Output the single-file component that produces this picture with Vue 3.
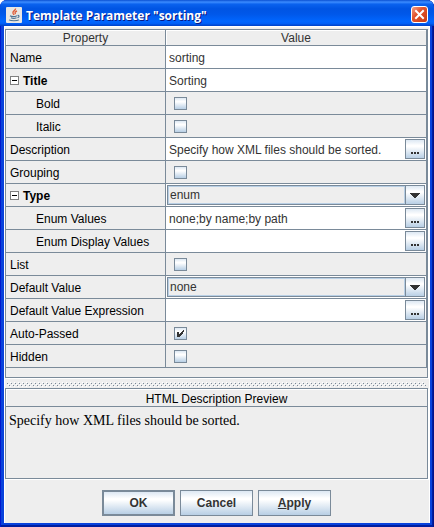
<script setup>
import { ref, reactive, computed } from 'vue'

const rows = reactive([
  { id: 'name', label: 'Name', kind: 'text', value: 'sorting' },
  { id: 'title', label: 'Title', kind: 'text', value: 'Sorting', group: true },
  { id: 'bold', label: 'Bold', kind: 'check', value: false, parent: 'title' },
  { id: 'italic', label: 'Italic', kind: 'check', value: false, parent: 'title' },
  { id: 'description', label: 'Description', kind: 'dialog', value: 'Specify how XML files should be sorted.' },
  { id: 'grouping', label: 'Grouping', kind: 'check', value: false },
  { id: 'type', label: 'Type', kind: 'select', value: 'enum', options: ['enum', 'string', 'boolean', 'integer'], group: true },
  { id: 'enum-values', label: 'Enum Values', kind: 'dialog', value: 'none;by name;by path', parent: 'type' },
  { id: 'enum-display', label: 'Enum Display Values', kind: 'dialog', value: '', parent: 'type' },
  { id: 'list', label: 'List', kind: 'check', value: false },
  { id: 'default', label: 'Default Value', kind: 'select', value: 'none', options: ['none', 'by name', 'by path'] },
  { id: 'default-expr', label: 'Default Value Expression', kind: 'dialog', value: '' },
  { id: 'auto', label: 'Auto-Passed', kind: 'check', value: true },
  { id: 'hidden', label: 'Hidden', kind: 'check', value: false }
])

const collapsed = ref([])
const visibleRows = computed(() => rows.filter((r) => !collapsed.value.includes(r.parent)))
const description = computed(() => rows.find((r) => r.id === 'description').value)

function toggle(id) {
  collapsed.value = collapsed.value.includes(id)
    ? collapsed.value.filter((c) => c !== id)
    : [...collapsed.value, id]
}
</script>

<template>
  <main class="window">
    <header class="titlebar">
      <svg class="java" viewBox="0 0 16 16" width="16" height="16" aria-hidden="true">
        <rect width="16" height="16" rx="1" fill="#e9e7e3" />
        <path d="M9.5 1.5c.5 2-3.500 2.500-2.500 4.800l1 1.700M11 4c-2 .8-2.400 1.600-1.500 3.200" fill="none" stroke="#e0603c" stroke-width="1.4" />
        <path d="M4 8.700c1.500 .9 5 .9 7 0M5 10.700c1.500 .8 4 .8 5.500 0M11.500 8.500c2-.5 2 1.500 0 2.200M3 12.900c2 1.200 8 1.200 10 0" fill="none" stroke="#4d7394" stroke-width="1.1" />
      </svg>
      <h1>Template Parameter "sorting"</h1>
      <button class="close" type="button" aria-label="Close">
        <svg viewBox="0 0 15 15" width="15" height="15" aria-hidden="true">
          <path d="M4 4l7 7M11 4l-7 7" stroke="#fff" stroke-width="2" stroke-linecap="square" />
        </svg>
      </button>
    </header>

    <div class="body">
      <section class="panel grid-panel">
        <table>
          <thead>
            <tr>
              <th scope="col" class="prop">Property</th>
              <th scope="col">Value</th>
            </tr>
          </thead>
          <tbody>
            <tr v-for="row in visibleRows" :key="row.id">
              <th scope="row" class="prop" :class="{ child: row.parent, group: row.group }">
                <div class="name">
                  <button
                    v-if="row.group"
                    class="toggle"
                    type="button"
                    :aria-label="'Toggle ' + row.label"
                    :aria-expanded="!collapsed.includes(row.id)"
                    @click="toggle(row.id)"
                  >
                    <svg viewBox="0 0 9 9" width="9" height="9" shape-rendering="crispEdges" aria-hidden="true">
                      <rect x="0.5" y="0.5" width="8" height="8" fill="#fff" stroke="#808080" />
                      <path d="M2 4.5h5" stroke="#000" />
                      <path v-if="collapsed.includes(row.id)" d="M4.5 2v5" stroke="#000" />
                    </svg>
                  </button>
                  <label :for="row.id">{{ row.label }}</label>
                </div>
              </th>
              <td :class="row.kind">
                <div class="cell">
                  <input v-if="row.kind === 'check'" :id="row.id" v-model="row.value" type="checkbox" />
                  <div v-else-if="row.kind === 'select'" class="combo">
                    <select :id="row.id" v-model="row.value">
                      <option v-for="o in row.options" :key="o">{{ o }}</option>
                    </select>
                    <span class="arrow">
                      <svg viewBox="0 0 10 5" width="10" height="5" shape-rendering="crispEdges" aria-hidden="true">
                        <path d="M0 0h10v1h-1v1h-1v1h-1v1h-1v1h-2v-1h-1v-1h-1v-1h-1v-1h-1z" fill="#333" />
                      </svg>
                    </span>
                  </div>
                  <template v-else>
                    <input :id="row.id" v-model="row.value" class="field" type="text" />
                    <button v-if="row.kind === 'dialog'" class="more" type="button" :aria-label="'Edit ' + row.label">
                      <svg viewBox="0 0 8 2" width="8" height="2" shape-rendering="crispEdges" aria-hidden="true">
                        <path d="M0 0h2v2h-2zM3 0h2v2h-2zM6 0h2v2h-2z" fill="#333" />
                      </svg>
                    </button>
                  </template>
                </div>
              </td>
            </tr>
          </tbody>
        </table>
      </section>

      <div class="splitter" role="separator">
        <svg width="100%" height="5" shape-rendering="crispEdges" aria-hidden="true">
          <defs>
            <pattern id="bumps" width="4" height="4" patternUnits="userSpaceOnUse">
              <path d="M1 2h1v1h-1zM3 0h1v1h-1z" fill="#fff" />
              <path d="M0 1h1v1h-1zM2 3h1v1h-1z" fill="#7a8a99" />
            </pattern>
          </defs>
          <rect width="100%" height="5" fill="url(#bumps)" />
        </svg>
      </div>

      <section class="panel preview">
        <h2>HTML Description Preview</h2>
        <p>{{ description }}</p>
      </section>

      <footer class="actions">
        <button class="push default" type="button">OK</button>
        <button class="push" type="button">Cancel</button>
        <button class="push" type="button"><u>A</u>pply</button>
      </footer>
    </div>
  </main>
</template>

<style>
body {
  margin: 0;
  background: #fff;
}
</style>

<style scoped>
* {
  box-sizing: border-box;
}

.window {
  --line: #7a8a99;
  --metal: linear-gradient(#dde8f3 0%, #fff 30%, #fff 36%, #b8cfe5 100%);
  display: flex;
  flex-direction: column;
  min-height: 100vh;
  padding: 0 4px 4px;
  border-radius: 7px 7px 0 0;
  background: #0842dc;
  box-shadow: inset 1px 0 #0019cf, inset -1px 0 #00138c, inset -2px -1px #001ea0, inset 0 -2px #001ea0;
  font: 12px/16px "Liberation Sans", Arial, sans-serif;
  color: #000;
  overflow: hidden;
}

button,
input,
select {
  margin: 0;
  padding: 0;
  border: 0;
  border-radius: 0;
  font: inherit;
  color: #333;
  appearance: none;
}

.titlebar {
  display: flex;
  align-items: center;
  gap: 4px;
  height: 26px;
  margin: 0 -4px;
  padding: 3px 6px 0;
  background: linear-gradient(#0a50d2 0%, #3c8cff 8%, #0a62ee 16%, #0054e3 34%, #0058ea 55%, #0066ff 82%, #0060f8 90%, #0040c4 100%);
}

.titlebar h1 {
  flex: 1;
  margin: 0;
  padding-top: 2px;
  font: bold 12px/18px "Open Sans", "Noto Sans", sans-serif;
  color: #fff;
  text-shadow: 1px 1px #0a1883;
  white-space: nowrap;
}

.close {
  width: 17px;
  height: 17px;
  border: 1px solid #fff;
  border-radius: 3px;
  background: linear-gradient(135deg, #f0a088, #e2532c 40%, #c73c14);
  display: grid;
  place-items: center;
}

.body {
  flex: 1;
  display: flex;
  flex-direction: column;
  padding: 3px 2px 7px 1px;
  background: #eee;
  box-shadow: inset 1px 1px #fff, inset -1px 0 #fff, inset 0 2px #f6f5ee;
}

.panel {
  border: 1px solid var(--line);
  box-shadow: 1px 1px #fff;
}

.grid-panel {
  padding-bottom: 9px;
}

table {
  width: 100%;
  border-collapse: separate;
  border-spacing: 0;
  table-layout: fixed;
}

th,
td {
  padding: 0;
  border: solid var(--line);
  border-width: 0 1px 1px 0;
  font-weight: normal;
  text-align: left;
}

.prop {
  width: 160px;
}

thead th {
  height: 16px;
  line-height: 14px;
  padding-top: 1px;
  text-align: center;
  color: #333;
  box-shadow: inset 1px 1px #fff;
}

.name {
  display: flex;
  align-items: center;
  gap: 4px;
  height: 22px;
  padding-left: 4px;
}

.name label {
  padding-top: 2px;
}

.child .name {
  padding-left: 30px;
}

.group {
  font-weight: bold;
}

.toggle {
  display: flex;
  background: none;
}

.cell {
  display: flex;
  align-items: center;
  height: 22px;
  padding: 1px;
}

td {
  background: #fff;
}

td.check {
  background: #eee;
}

.check .cell {
  padding-left: 8px;
}

.check input {
  width: 13px;
  height: 13px;
  border: 1px solid var(--line);
  background: var(--metal);
}

.check input:checked {
  background:
    url("data:image/svg+xml,%3Csvg xmlns='http://www.w3.org/2000/svg' width='11' height='11' shape-rendering='crispEdges'%3E%3Cpath d='M2 4h2v2h1v-1h1v-1h1v-1h1v-1h1v2h-1v2h-1v1h-1v1h-1v1h-3z' fill='%23333'/%3E%3C/svg%3E") no-repeat,
    var(--metal);
}

.field {
  flex: 1;
  min-width: 0;
  height: 20px;
  padding: 2px 0 0 2px;
  background: #fff;
}

.more,
.arrow {
  flex: none;
  display: flex;
  justify-content: center;
  width: 20px;
  height: 20px;
  border: 1px solid var(--line);
  background: var(--metal);
}

.more {
  align-items: flex-end;
  padding-bottom: 4px;
}

.combo {
  flex: 1;
  display: flex;
}

.combo select {
  flex: 1;
  height: 20px;
  padding-left: 2px;
  border: 1px solid var(--line);
  border-right: 0;
  background: #eee;
  box-shadow: inset 0 0 0 1px #b8cfe5;
}

.arrow {
  align-items: center;
  pointer-events: none;
}

.splitter {
  display: flex;
  margin: 4px 2px 1px;
}

.preview {
  flex: 1;
  min-height: 60px;
}

.preview h2 {
  margin: 0;
  height: 18px;
  border-bottom: 1px solid var(--line);
  box-shadow: inset 1px 1px #fff;
  font: 12px/20px "Liberation Sans", Arial, sans-serif;
  text-align: center;
}

.preview p {
  margin: 5px 3px;
  font: 14px/18px "Liberation Serif", "Times New Roman", serif;
}

.actions {
  display: flex;
  justify-content: center;
  gap: 5px;
  padding-top: 11px;
}

.push {
  width: 73px;
  height: 26px;
  border: 1px solid var(--line);
  background: var(--metal);
  font-weight: bold;
}

.default {
  border-width: 2px;
}
</style>
